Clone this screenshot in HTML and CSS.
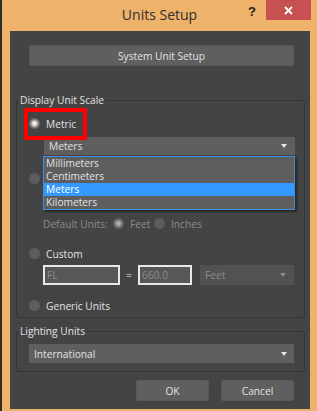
FILE: index.html
```html
<!DOCTYPE html>
<html>
<head>
<meta charset="utf-8">
<title>Units Setup</title>
<link rel="stylesheet" href="styles.css">
</head>
<body>
<div class="frame">
  <div class="titlebar">
    <div></div>
    <div class="title">Units Setup</div>
    <div class="ctrls">
      <span class="help">?</span>
      <span class="close"><svg width="9" height="9" viewBox="0 0 9 9"><path d="M1 1L8 8M8 1L1 8" stroke="#fff" stroke-width="1.8" fill="none"/></svg></span>
    </div>
  </div>
  <div class="client">
    <button class="btn sys">System Unit Setup</button>

    <fieldset class="group g1">
      <legend>Display Unit Scale</legend>
      <div class="row metric"><span class="radio on"></span><span>Metric</span><span class="mark"></span></div>
      <div class="select-wrap">
        <div class="select meters"><span>Meters</span><svg class="arrow" width="6" height="4" viewBox="0 0 6 4"><path d="M0 0H6L3 4Z" fill="#e6e6e6"/></svg></div>
        <ul class="list">
          <li>Millimeters</li>
          <li>Centimeters</li>
          <li class="sel">Meters</li>
          <li>Kilometers</li>
        </ul>
      </div>
      <div class="row imperial"><span class="radio"></span></div>
      <div class="row defaults">
        <span class="lbl dl">Default Units:</span>
        <span class="radio dis-on"></span>
        <span class="lbl feet">Feet</span>
        <span class="radio"></span>
        <span class="lbl">Inches</span>
      </div>
      <div class="row custom"><span class="radio"></span><span>Custom</span></div>
      <div class="inputs">
        <div class="field f1">FL</div>
        <span class="eq">=</span>
        <div class="field f2">660.0</div>
        <div class="select dis"><span>Feet</span><svg class="arrow" width="6" height="4" viewBox="0 0 6 4"><path d="M0 0H6L3 4Z" fill="#8e8e8e"/></svg></div>
      </div>
      <div class="row generic"><span class="radio"></span><span>Generic Units</span></div>
    </fieldset>

    <fieldset class="group g2">
      <legend>Lighting Units</legend>
      <div class="select intl"><span>International</span><svg class="arrow" width="6" height="4" viewBox="0 0 6 4"><path d="M0 0H6L3 4Z" fill="#e6e6e6"/></svg></div>
    </fieldset>

    <div class="actions">
      <button class="btn act">OK</button>
      <button class="btn act">Cancel</button>
    </div>
  </div>
</div>
</body>
</html>
```
FILE: styles.css
```css
html, body {
  margin: 0;
  padding: 0;
}
body {
  width: 317px;
  height: 411px;
  overflow: hidden;
  background: #2d2d2d;
  font-family: "Open Sans", "Liberation Sans", sans-serif;
  font-size: 10.2px;
  color: #e2e2e2;
}
.frame {
  margin-left: 2px;
  width: 315px;
  height: 411px;
  box-sizing: border-box;
  background: #efb26b;
  padding: 0 7px 2px 8px;
  display: flex;
  flex-direction: column;
}
.titlebar {
  height: 31px;
  flex: none;
  margin: 0 -7px 0 -8px;
  display: grid;
  grid-template-columns: 1fr auto 1fr;
}
.title {
  font-size: 14px;
  line-height: 30px;
  color: #2f2f2f;
}
.ctrls {
  display: flex;
  justify-content: flex-end;
  align-items: flex-start;
  padding-right: 6px;
}
.help {
  font-family: "Liberation Sans", sans-serif;
  font-weight: bold;
  font-size: 13px;
  line-height: 13px;
  color: #222;
  margin-top: 5px;
  margin-right: 10px;
}
.close {
  width: 45px;
  height: 20px;
  background: #c75050;
  display: flex;
  align-items: center;
  justify-content: center;
}
.client {
  flex: 1;
  background: #444444;
  display: flex;
  flex-direction: column;
}
.btn {
  font: inherit;
  color: #e2e2e2;
  background: #5f5f5f;
  border: none;
  border-radius: 3px;
  height: 21px;
  padding: 0;
  box-shadow: inset 0 0 0 1px #595959;
}
.sys {
  margin: 14px 16px 0 19px;
}
.group {
  margin: 0 5px 0 6px;
  padding: 0;
  border: 1px solid #363636;
  border-radius: 2px;
  min-width: 0;
}
.group legend {
  padding: 0 2px;
  margin-left: 1px;
  line-height: 14px;
  height: 14px;
}
.g1 {
  margin-top: 27px;
  padding-bottom: 4px;
}
.row {
  display: flex;
  align-items: center;
  height: 15px;
  padding-left: 12px;
  gap: 6px;
}
.radio {
  flex: none;
  width: 11px;
  height: 11px;
  border-radius: 50%;
  background: #5d5d5d;
}
.radio.on {
  background: radial-gradient(circle at center, #f6f6f6 0, #e6e6e6 1.8px, #8e8e8e 3.6px, #5d5d5d 5.5px);
}
.radio.dis-on {
  background: radial-gradient(circle at center, #b4b4b4 0, #a6a6a6 1.8px, #727272 3.6px, #5a5a5a 5.5px);
}
.metric {
  position: relative;
  margin-top: 9px;
}
.mark {
  position: absolute;
  left: 7px;
  top: -8px;
  width: 63px;
  height: 32px;
  box-sizing: border-box;
  border: 4px solid #ff0000;
  z-index: 2;
}
.select-wrap {
  position: relative;
  margin: 6px 9px 0 27px;
}
.select {
  display: flex;
  align-items: center;
  justify-content: space-between;
  background: #5f5f5f;
  height: 18px;
  box-sizing: border-box;
  padding: 0 8px 0 5px;
}
.list {
  position: absolute;
  z-index: 3;
  left: -1px;
  right: 0;
  top: 19px;
  margin: 0;
  padding: 0;
  list-style: none;
  background: #5e5e5e;
  border: 1px solid #3c8fe2;
  box-shadow: 2px 2px 2px rgba(0, 0, 0, 0.45);
}
.list li {
  height: 13px;
  line-height: 13px;
  padding-left: 2px;
}
.list li.sel {
  background: #3399ff;
  color: #ffffff;
}
.imperial {
  margin-top: 16px;
}
.defaults {
  margin-top: 30px;
  padding-left: 26px;
  gap: 0;
  color: #8c8c8c;
}
.lbl.dl {
  width: 70px;
}
.lbl.feet {
  width: 24px;
  margin-left: 6px;
}
.defaults .lbl:last-child {
  margin-left: 6px;
}
.custom {
  margin-top: 15px;
}
.inputs {
  display: flex;
  align-items: center;
  height: 20px;
  margin-top: 4px;
  padding-left: 26px;
}
.field {
  height: 20px;
  box-sizing: border-box;
  border: 2px solid #e8e8e8;
  background: #575757;
  color: #8a8a8a;
  line-height: 16px;
  padding-left: 2px;
}
.f1 {
  width: 77px;
}
.f2 {
  width: 54px;
}
.eq {
  width: 18px;
  text-align: center;
  color: #ececec;
}
.select.dis {
  width: 94px;
  height: 20px;
  margin-left: 8px;
  background: #525252;
  color: #8c8c8c;
  padding: 0 8px 0 5px;
}
.generic {
  margin-top: 13px;
}
.g2 {
  margin-top: 6px;
  padding-bottom: 8px;
}
.intl {
  height: 19px;
  margin: 6px 10px 0 12px;
  padding: 0 7px 0 5px;
}
.actions {
  display: flex;
  justify-content: flex-end;
  gap: 12px;
  margin-top: 8px;
  padding-right: 16px;
}
.act {
  width: 73px;
}
```
